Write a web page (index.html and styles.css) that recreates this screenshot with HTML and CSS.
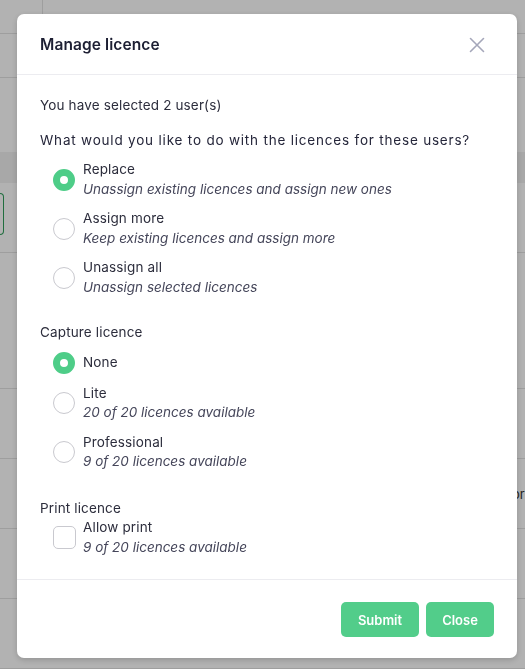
FILE: index.html
```html
<!DOCTYPE html>
<html>
<head>
<meta charset="utf-8">
<link rel="stylesheet" href="styles.css">
</head>
<body>
<div class="page">
  <div class="topbar"><div class="topcell"></div></div>
  <div class="row row-a"></div>
  <div class="gap-area"></div>
  <div class="thead"></div>
  <div class="row row-b"><div class="green-btn"></div></div>
  <div class="row row-c"></div>
  <div class="row row-d"></div>
  <div class="row row-d"><span class="cell-text">Editor</span></div>
  <div class="row row-d"></div>
  <div class="row row-d"></div>
</div>
<div class="overlay"></div>
<div class="modal">
  <div class="modal-header">
    <h2 class="modal-title">Manage licence</h2>
    <svg class="close-x" width="16" height="16" viewBox="0 0 16 16"><path d="M1.5 1.5 L14.5 14.5 M14.5 1.5 L1.5 14.5" stroke="#a5a7ba" stroke-width="1.6" stroke-linecap="round" fill="none"/></svg>
  </div>
  <div class="modal-body">
    <p class="line">You have selected 2 user(s)</p>
    <p class="line question">What would you like to do with the licences for these users?</p>
    <div class="options">
      <div class="option"><span class="radio checked"></span><div class="texts"><div class="lbl">Replace</div><div class="sub">Unassign existing licences and assign new ones</div></div></div>
      <div class="option"><span class="radio"></span><div class="texts"><div class="lbl">Assign more</div><div class="sub">Keep existing licences and assign more</div></div></div>
      <div class="option"><span class="radio"></span><div class="texts"><div class="lbl">Unassign all</div><div class="sub">Unassign selected licences</div></div></div>
    </div>
    <p class="line section">Capture licence</p>
    <div class="options">
      <div class="option single"><span class="radio checked"></span><div class="texts"><div class="lbl">None</div></div></div>
      <div class="option"><span class="radio"></span><div class="texts"><div class="lbl">Lite</div><div class="sub">20 of 20 licences available</div></div></div>
      <div class="option"><span class="radio"></span><div class="texts"><div class="lbl">Professional</div><div class="sub">9 of 20 licences available</div></div></div>
    </div>
    <p class="line section section-print">Print licence</p>
    <div class="options tight">
      <div class="option option-check"><span class="checkbox"></span><div class="texts"><div class="lbl">Allow print</div><div class="sub">9 of 20 licences available</div></div></div>
    </div>
  </div>
  <div class="modal-footer">
    <button class="btn btn-submit">Submit</button>
    <button class="btn btn-close">Close</button>
  </div>
</div>
</body>
</html>
```
FILE: styles.css
```css
html, body {
  margin: 0;
  padding: 0;
  background: #ffffff;
  font-family: Inter, "Open Sans", "DejaVu Sans", sans-serif;
  overflow: hidden;
}
.page {
  width: 525px;
  height: 669px;
}
.topbar {
  height: 33px;
  border-bottom: 1px solid #e2e2e2;
  display: flex;
}
.topcell {
  width: 42px;
  border-right: 1px solid #e2e2e2;
}
.row {
  border-bottom: 1px solid #e2e2e2;
  box-sizing: border-box;
}
.row-a { height: 44px; }
.gap-area { height: 74px; }
.thead { height: 31px; background: #f1f1f1; }
.row-b { height: 70px; padding-top: 10px; }
.green-btn {
  width: 4px;
  height: 42px;
  border: 1px solid #2e9e5a;
  border-left: none;
  border-radius: 0 5px 5px 0;
  box-sizing: border-box;
}
.row-c { height: 136px; }
.row-d { height: 70px; display: flex; align-items: center; }
.cell-text {
  margin-left: 489px;
  font-size: 13px;
  color: #333;
}
.overlay {
  position: fixed;
  inset: 0;
  background: rgba(0, 0, 0, 0.3);
}
.modal {
  position: fixed;
  left: 17px;
  top: 14px;
  width: 500px;
  height: 644px;
  background: #fff;
  border-radius: 7px;
  box-shadow: 0 2px 6px rgba(0, 0, 0, 0.18);
  display: flex;
  flex-direction: column;
  color: #2c2d3c;
}
.modal-header {
  height: 60px;
  border-bottom: 1px solid #ececf0;
  display: flex;
  align-items: center;
  justify-content: space-between;
  padding: 0 32px 0 23px;
  flex-shrink: 0;
}
.modal-title {
  margin: 0;
  font-size: 15.5px;
  font-weight: 600;
  letter-spacing: 0.1px;
  color: #1d1f33;
}
.close-x { display: block; margin-top: 1px; }
.modal-body {
  flex: 1;
  padding: 20px 23px 0 23px;
  font-size: 13.5px;
  letter-spacing: 0.15px;
}
.line {
  margin: 0;
  line-height: 20px;
  color: #2c2d3c;
}
.question { margin-top: 15px; letter-spacing: 0.8px; color: #25263a; }
.section { margin-top: 24.5px; }
.section-print { margin-top: 26.5px; }
.options {
  display: flex;
  flex-direction: column;
  gap: 10px;
  margin-top: 10px;
  padding-left: 13px;
}
.options.tight { margin-top: 0; }
.option {
  display: flex;
  align-items: center;
  gap: 8px;
}
.option-check { gap: 7px; }
.texts { line-height: 19.5px; }
.lbl { color: #2c2d3c; }
.sub { font-style: italic; color: #45465a; letter-spacing: 0; }
.radio {
  width: 22px;
  height: 22px;
  border-radius: 50%;
  border: 1px solid #c9c9cf;
  box-sizing: border-box;
  flex-shrink: 0;
}
.radio.checked {
  border: 7px solid #4ecd88;
}
.option.single { height: 22px; }
.checkbox {
  width: 23px;
  height: 23px;
  border-radius: 5px;
  border: 1px solid #c9c9cf;
  box-sizing: border-box;
  flex-shrink: 0;
}
.modal-footer {
  flex-shrink: 0;
  border-top: 1px solid #ececf0;
  padding: 22px 23px 21px 23px;
  display: flex;
  justify-content: flex-end;
  gap: 7px;
}
.btn {
  height: 35px;
  border: none;
  border-radius: 5px;
  background: #52cd8a;
  color: #fff;
  font-family: Inter, "Open Sans", sans-serif;
  font-size: 13px;
  font-weight: 600;
  cursor: pointer;
}
.btn-submit { width: 78px; }
.btn-close { width: 68px; }
```
